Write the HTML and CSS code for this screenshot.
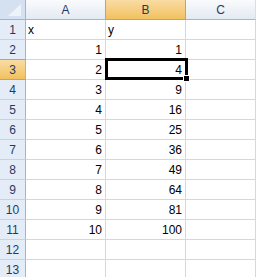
FILE: index.html
```html
<!DOCTYPE html>
<html>
<head>
<meta charset="utf-8">
<link rel="stylesheet" href="styles.css">
</head>
<body>
<div class="sheet">
  <div class="hd corner"><svg class="tri" width="25" height="19" viewBox="0 0 25 19"><polygon points="21,4 21,16 8,16" fill="#eef3f9"/></svg></div>
  <div class="hd col pre-sel">A</div>
  <div class="hd col sel">B</div>
  <div class="hd col">C</div>

  <div class="hd row">1</div><div class="c">x</div><div class="c">y</div><div class="c"></div>
  <div class="hd row pre-sel-row">2</div><div class="c n">1</div><div class="c n">1</div><div class="c"></div>
  <div class="hd row sel-row">3</div><div class="c n">2</div><div class="c n active">4<span class="selbox"><span class="handle"></span></span></div><div class="c"></div>
  <div class="hd row">4</div><div class="c n">3</div><div class="c n">9</div><div class="c"></div>
  <div class="hd row">5</div><div class="c n">4</div><div class="c n">16</div><div class="c"></div>
  <div class="hd row">6</div><div class="c n">5</div><div class="c n">25</div><div class="c"></div>
  <div class="hd row">7</div><div class="c n">6</div><div class="c n">36</div><div class="c"></div>
  <div class="hd row">8</div><div class="c n">7</div><div class="c n">49</div><div class="c"></div>
  <div class="hd row">9</div><div class="c n">8</div><div class="c n">64</div><div class="c"></div>
  <div class="hd row">10</div><div class="c n">9</div><div class="c n">81</div><div class="c"></div>
  <div class="hd row">11</div><div class="c n">10</div><div class="c n">100</div><div class="c"></div>
  <div class="hd row">12</div><div class="c"></div><div class="c"></div><div class="c"></div>
  <div class="hd row">13</div><div class="c"></div><div class="c"></div><div class="c"></div>
</div>
</body>
</html>
```
FILE: styles.css
```css
html, body {
  margin: 0;
  padding: 0;
  background: #ffffff;
  overflow: hidden;
}
.sheet {
  display: grid;
  grid-template-columns: 26px 80px 80px 70px;
  grid-auto-rows: 20px;
  font-family: "Liberation Sans", Arial, sans-serif;
  font-size: 12px;
  color: #000000;
  width: 256px;
  height: 277px;
  overflow: hidden;
}
.sheet > div {
  box-sizing: border-box;
  border-right: 1px solid #d0d7e5;
  border-bottom: 1px solid #d0d7e5;
  line-height: 19px;
  padding-top: 1px;
  white-space: nowrap;
  overflow: visible;
}
.c {
  padding-left: 2px;
  position: relative;
}
.c.n {
  text-align: right;
  padding-right: 3px;
}
.c.active {
  z-index: 2;
}
.hd {
  color: #1f3b5e;
  text-align: center;
}
.col {
  background: linear-gradient(#f9fbfd, #e4eaf3);
  border-bottom-color: #9eb6ce !important;
  border-right-color: #d5dfec !important;
}
.col.pre-sel {
  border-right-color: #f29536 !important;
}
.col.sel {
  background: linear-gradient(#f9dca4, #f1c15f);
  border-right-color: #f29536 !important;
  border-bottom-color: #f29536 !important;
}
.corner {
  background: #d5e1f0;
  border-right-color: #9eb6ce !important;
  border-bottom-color: #9eb6ce !important;
  padding-top: 0 !important;
  line-height: 0 !important;
}
.tri {
  display: block;
}
.row {
  background: #e4ecf7;
  border-right-color: #9eb6ce !important;
  border-bottom-color: #c5d3e6 !important;
}
.row.pre-sel-row {
  border-bottom-color: #f29536 !important;
}
.row.sel-row {
  background: linear-gradient(#f9dca4, #f1c15f);
  border-bottom-color: #f29536 !important;
}
.selbox {
  position: absolute;
  left: -1px;
  top: -2px;
  right: -3px;
  bottom: -1px;
  border: 3px solid #000000;
  pointer-events: none;
}
.handle {
  position: absolute;
  right: -5px;
  bottom: -5px;
  width: 5px;
  height: 5px;
  background: #000000;
  border: 1px solid #ffffff;
}
```
